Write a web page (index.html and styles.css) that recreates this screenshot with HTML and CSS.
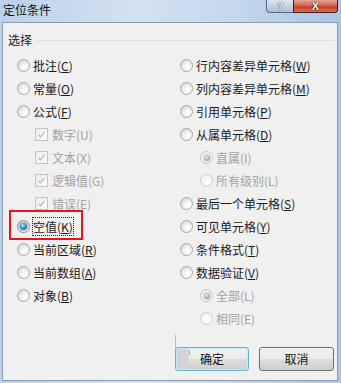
FILE: index.html
```html
<!DOCTYPE html>
<html lang="zh-CN">
<head>
<meta charset="utf-8">
<title>定位条件</title>
<link rel="stylesheet" href="styles.css">
</head>
<body>
<div class="window">
  <div class="titlebar">
    <span class="title">定位条件</span>
    <div class="caption-btns">
      <div class="cap-btn help">?</div>
      <div class="cap-btn close">X</div>
    </div>
  </div>
  <div class="client">
    <div class="group-head">
      <span class="group-label">选择</span>
      <div class="group-rule"></div>
    </div>
    <div class="options">
      <div class="col">
        <div class="row"><span class="radio"></span><span class="label">批注(<u>C</u>)</span></div>
        <div class="row"><span class="radio"></span><span class="label">常量(<u>O</u>)</span></div>
        <div class="row"><span class="radio"></span><span class="label">公式(<u>F</u>)</span></div>
        <div class="row sub"><span class="check"><svg viewBox="0 0 13 13" width="13" height="13"><path d="M3 6.8 L5.4 9.3 L10 3.2" fill="none" stroke="#b4b4b4" stroke-width="1.3"/></svg></span><span class="label dis">数字(U)</span></div>
        <div class="row sub"><span class="check"><svg viewBox="0 0 13 13" width="13" height="13"><path d="M3 6.8 L5.4 9.3 L10 3.2" fill="none" stroke="#b4b4b4" stroke-width="1.3"/></svg></span><span class="label dis">文本(X)</span></div>
        <div class="row sub"><span class="check"><svg viewBox="0 0 13 13" width="13" height="13"><path d="M3 6.8 L5.4 9.3 L10 3.2" fill="none" stroke="#b4b4b4" stroke-width="1.3"/></svg></span><span class="label dis">逻辑值(G)</span></div>
        <div class="row sub"><span class="check"><svg viewBox="0 0 13 13" width="13" height="13"><path d="M3 6.8 L5.4 9.3 L10 3.2" fill="none" stroke="#b4b4b4" stroke-width="1.3"/></svg></span><span class="label dis">错误(E)</span></div>
        <div class="row marked"><span class="radio on"></span><span class="label focus">空值(<u>K</u>)</span><span class="highlight"></span></div>
        <div class="row"><span class="radio"></span><span class="label">当前区域(<u>R</u>)</span></div>
        <div class="row"><span class="radio"></span><span class="label">当前数组(<u>A</u>)</span></div>
        <div class="row"><span class="radio"></span><span class="label">对象(<u>B</u>)</span></div>
      </div>
      <div class="col">
        <div class="row"><span class="radio"></span><span class="label">行内容差异单元格(<u>W</u>)</span></div>
        <div class="row"><span class="radio"></span><span class="label">列内容差异单元格(<u>M</u>)</span></div>
        <div class="row"><span class="radio"></span><span class="label">引用单元格(<u>P</u>)</span></div>
        <div class="row"><span class="radio"></span><span class="label">从属单元格(<u>D</u>)</span></div>
        <div class="row subr"><span class="radio dis on"></span><span class="label dis">直属(I)</span></div>
        <div class="row subr"><span class="radio dis"></span><span class="label dis">所有级别(L)</span></div>
        <div class="row"><span class="radio"></span><span class="label">最后一个单元格(<u>S</u>)</span></div>
        <div class="row"><span class="radio"></span><span class="label">可见单元格(<u>Y</u>)</span></div>
        <div class="row"><span class="radio"></span><span class="label">条件格式(<u>T</u>)</span></div>
        <div class="row"><span class="radio"></span><span class="label">数据验证(<u>V</u>)</span></div>
        <div class="row subr"><span class="radio dis on"></span><span class="label dis">全部(L)</span></div>
        <div class="row subr"><span class="radio dis"></span><span class="label dis">相同(E)</span></div>
      </div>
    </div>
    <div class="buttons">
      <div class="btn default">确定</div>
      <div class="btn cancel">取消</div>
    </div>
  </div>
</div>
</body>
</html>
```
FILE: styles.css
```css
html, body {
  margin: 0;
  padding: 0;
}
body {
  width: 341px;
  height: 383px;
  overflow: hidden;
  font-family: "Noto Sans CJK SC", "Noto Sans", sans-serif;
  font-size: 12px;
  color: #1a1a1a;
}
.window {
  width: 341px;
  height: 383px;
  display: flex;
  flex-direction: column;
  background: linear-gradient(to right, #bcd1e9 0%, #d3e2f1 40%, #c6d9ee 65%, #abc6e3 100%);
}
.titlebar {
  height: 22px;
  display: flex;
  align-items: flex-start;
  flex: none;
}
.title {
  padding-left: 3px;
  line-height: 20px;
  color: #111;
}
.caption-btns {
  margin-left: auto;
  margin-right: 3px;
  display: flex;
}
.cap-btn {
  height: 13px;
  box-sizing: border-box;
  border: 1px solid #5a6a7e;
  border-top: none;
  text-align: center;
  font-family: "Liberation Sans", sans-serif;
  font-weight: bold;
  line-height: 12px;
  color: #fff;
}
.help {
  width: 27px;
  border-radius: 0 0 0 4px;
  border-right: none;
  background: linear-gradient(to bottom, #dde7f1 0%, #c5d4e4 50%, #aebfd3 100%);
  font-size: 11px;
  text-shadow: 0 0 1px #334, 0 0 1px #334;
}
.close {
  width: 45px;
  border-color: #4a1a14;
  border-radius: 0 0 4px 0;
  background: linear-gradient(to bottom, #e8a594 0%, #d26a58 45%, #c2412c 55%, #d56f52 100%);
  font-size: 11px;
  text-shadow: 0 0 1px #3a0a05, 0 0 1px #3a0a05, 0 0 1px #3a0a05;
}
.client {
  flex: 1;
  margin: 0 3px 2px 2px;
  border: 1px solid #8d9db1;
  background: #f0f0f0;
  display: flex;
  flex-direction: column;
}
.group-head {
  margin-top: 9px;
  height: 16px;
  display: flex;
  align-items: center;
  padding-left: 5px;
  padding-right: 3px;
}
.group-label {
  line-height: 16px;
}
.group-rule {
  flex: 1;
  height: 1px;
  background: #d9dfe4;
  margin-left: 5px;
}
.options {
  margin-top: 6px;
  display: grid;
  grid-template-columns: 163px 1fr;
  padding-left: 14px;
}
.col {
  display: flex;
  flex-direction: column;
}
.row {
  height: 23px;
  display: flex;
  align-items: center;
  gap: 3px;
  white-space: nowrap;
}
.row.sub {
  padding-left: 18px;
  gap: 4px;
}
.row.subr {
  padding-left: 20px;
}
.label {
  line-height: 17px;
}
.label u {
  text-underline-offset: 1px;
}
.label.dis {
  color: #a3a3a3;
}
.radio {
  flex: none;
  width: 13px;
  height: 13px;
  box-sizing: border-box;
  border-radius: 50%;
  border: 1px solid #a9a9a9;
  background: radial-gradient(circle at 62% 65%, #ffffff 0%, #f7f7f7 30%, #dcdcdc 70%, #c8c8c8 100%);
  display: flex;
  align-items: center;
  justify-content: center;
}
.radio.dis {
  border-color: #cdcdcd;
  background: radial-gradient(circle at 62% 65%, #ffffff 0%, #f9f9f9 35%, #e8e8e8 100%);
}
.radio.on {
  border-color: #8a8a8a;
}
.radio.on::after {
  content: "";
  width: 7px;
  height: 7px;
  border-radius: 50%;
  background: radial-gradient(circle at 40% 35%, #bfe8fb 0%, #3a9ad8 40%, #14538c 95%);
  box-shadow: 0 0 0 1px rgba(30, 70, 110, 0.3);
}
.radio.dis.on {
  border-color: #c4c4c4;
}
.radio.dis.on::after {
  width: 6px;
  height: 6px;
  background: radial-gradient(circle at 40% 35%, #ececec 0%, #b8b8b8 45%, #8f8f8f 95%);
  box-shadow: 0 0 0 1px rgba(120, 120, 120, 0.25);
}
.check {
  flex: none;
  width: 13px;
  height: 13px;
  box-sizing: border-box;
  border: 1px solid #c4c4c4;
  background: linear-gradient(to bottom right, #ececec, #fbfbfb);
  display: flex;
  align-items: center;
  justify-content: center;
}
.check svg {
  display: block;
  width: 11px;
  height: 11px;
}
.row.marked {
  position: relative;
}
.label.focus {
  border: 1px dotted #222;
  margin-left: -1px;
  line-height: 17px;
}
.highlight {
  position: absolute;
  left: -8px;
  top: -5px;
  width: 74px;
  height: 30px;
  box-sizing: border-box;
  border: 2px solid #e8131b;
}
.buttons {
  margin-top: 17px;
  display: flex;
  justify-content: flex-end;
  gap: 10px;
  padding-right: 3px;
}
.btn {
  height: 24px;
  box-sizing: border-box;
  border: 1px solid #707070;
  border-radius: 3px;
  background: linear-gradient(to bottom, #f2f2f2 0%, #ebebeb 49%, #dddddd 50%, #cfcfcf 100%);
  text-align: center;
  line-height: 22px;
  color: #111;
}
.btn.default {
  width: 74px;
  position: relative;
  border-color: #5fb4d8;
  box-shadow: inset 0 0 0 1px #c6ecfa;
  background: linear-gradient(to right, #d4d4d4 0px, #d4d4d4 12px, transparent 13px),
              linear-gradient(to bottom, #f2f2f2 0%, #ebebeb 49%, #dddddd 50%, #cfcfcf 100%);
}
.btn.default::before {
  content: "";
  position: absolute;
  left: -1px;
  top: -13px;
  width: 1px;
  height: 13px;
  background: #9cc4dc;
}
.btn.default::after {
  content: "";
  position: absolute;
  left: 13px;
  top: 2px;
  width: 1px;
  height: 5px;
  background: #e7944a;
}
.btn.cancel {
  width: 75px;
}
```
